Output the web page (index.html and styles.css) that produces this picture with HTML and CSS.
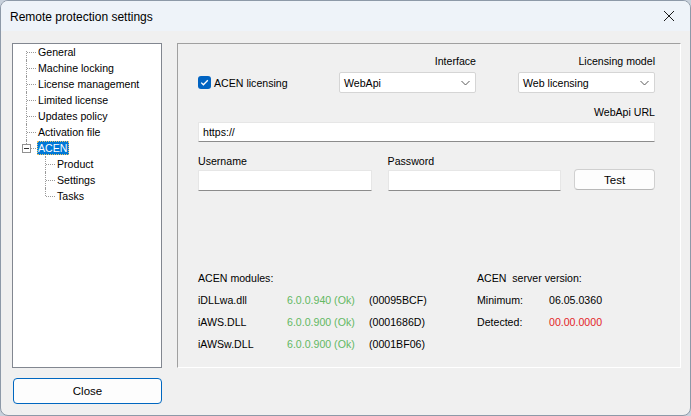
FILE: index.html
```html
<!DOCTYPE html>
<html>
<head>
<meta charset="utf-8">
<link rel="stylesheet" href="styles.css">
</head>
<body>
<div class="window">
  <div class="titlebar">
    <span class="title">Remote protection settings</span>
    <svg class="close-x" width="12" height="12" viewBox="0 0 12 12"><path d="M1 1 L11 11 M11 1 L1 11" stroke="#1a1a1a" stroke-width="1" fill="none"/></svg>
  </div>
  <div class="content">
    <div class="main">
      <div class="tree">
        <div class="row"><span class="conn first"></span><span class="lbl">General</span></div>
        <div class="row"><span class="conn"></span><span class="lbl">Machine locking</span></div>
        <div class="row"><span class="conn"></span><span class="lbl">License management</span></div>
        <div class="row"><span class="conn"></span><span class="lbl">Limited license</span></div>
        <div class="row"><span class="conn"></span><span class="lbl">Updates policy</span></div>
        <div class="row"><span class="conn"></span><span class="lbl">Activation file</span></div>
        <div class="row"><span class="conn expander"><span class="box"></span></span><span class="lbl selected">ACEN</span></div>
        <div class="row child"><span class="conn"></span><span class="lbl">Product</span></div>
        <div class="row child"><span class="conn"></span><span class="lbl">Settings</span></div>
        <div class="row child"><span class="conn last"></span><span class="lbl">Tasks</span></div>
      </div>
      <div class="panel">
        <div class="row-a">
          <div class="check-col">
            <span class="checkbox"><svg width="13" height="13" viewBox="0 0 13 13"><path d="M3.2 6.6 L5.4 8.8 L9.8 4.2" stroke="#fff" stroke-width="1.3" fill="none"/></svg></span>
            <span>ACEN licensing</span>
          </div>
          <div class="field">
            <div class="flabel">Interface</div>
            <div class="combo"><span>WebApi</span><svg width="9" height="6" viewBox="0 0 9 6"><path d="M0.5 1 L4.5 5 L8.5 1" stroke="#5a5a5a" stroke-width="1" fill="none"/></svg></div>
          </div>
          <div class="field lic">
            <div class="flabel">Licensing model</div>
            <div class="combo"><span>Web licensing</span><svg width="9" height="6" viewBox="0 0 9 6"><path d="M0.5 1 L4.5 5 L8.5 1" stroke="#5a5a5a" stroke-width="1" fill="none"/></svg></div>
          </div>
        </div>
        <div class="row-b">
          <div class="flabel">WebApi URL</div>
          <div class="input url">https://</div>
        </div>
        <div class="row-c">
          <div class="cfield">
            <div class="clabel">Username</div>
            <div class="input cred"></div>
          </div>
          <div class="cfield">
            <div class="clabel">Password</div>
            <div class="input cred"></div>
          </div>
          <div class="btn test">Test</div>
        </div>
        <div class="info">
          <div class="c1">ACEN modules:</div><div></div><div></div><div class="c4">ACEN&nbsp; server version:</div>
          <div>iDLLwa.dll</div><div class="ok">6.0.0.940 (Ok)</div><div>(00095BCF)</div><div>Minimum:</div><div>06.05.0360</div>
          <div>iAWS.DLL</div><div class="ok">6.0.0.900 (Ok)</div><div>(0001686D)</div><div>Detected:</div><div class="bad">00.00.0000</div>
          <div>iAWSw.DLL</div><div class="ok">6.0.0.900 (Ok)</div><div>(0001BF06)</div><div></div><div></div>
        </div>
      </div>
    </div>
    <div class="btn close">Close</div>
  </div>
</div>
</body>
</html>
```

FILE: styles.css
```css
* { box-sizing: border-box; }
html, body { margin: 0; padding: 0; }
body {
  width: 691px;
  height: 416px;
  background: #c8d1dc;
  font-family: "Liberation Sans", Arial, sans-serif;
  font-size: 10.6px;
  color: #000;
  overflow: hidden;
}
.window {
  width: 691px;
  height: 416px;
  border: 1px solid #8d99a8;
  border-radius: 8px;
  background: #f0f0f0;
  overflow: hidden;
  display: flex;
  flex-direction: column;
}
.titlebar {
  height: 30px;
  flex: none;
  background: #eef3f9;
  display: flex;
  align-items: center;
  padding: 0 10px 0 9px;
}
.title {
  font-size: 12px;
  flex: 1;
  padding-top: 1px;
}
.close-x { margin-right: 5px; }
.content {
  padding: 12px 9px 0 11px;
  display: flex;
  flex-direction: column;
}
.main {
  display: flex;
  height: 325px;
}
.tree {
  width: 150px;
  background: #fff;
  border: 1px solid #828790;
}
.row {
  height: 16px;
  display: flex;
  align-items: center;
  padding-left: 13px;
}
.row.child { padding-left: 32px; }
.conn {
  width: 11px;
  height: 16px;
  flex: none;
  position: relative;
}
.conn::before {
  content: "";
  position: absolute;
  left: 0;
  top: 0;
  height: 16px;
  border-left: 1px dotted #9a9a9a;
}
.conn.first::before { top: 7px; height: 9px; }
.conn.last::before { height: 8px; }
.conn::after {
  content: "";
  position: absolute;
  left: 1px;
  top: 8px;
  width: 9px;
  border-top: 1px dotted #9a9a9a;
}
.conn.expander::before { height: 4px; }
.conn.expander::after { left: 5px; width: 5px; }
.box {
  position: absolute;
  left: -4px;
  top: 4px;
  width: 9px;
  height: 9px;
  border: 1px solid #919191;
  background: #fff;
}
.box::after {
  content: "";
  position: absolute;
  left: 1px;
  top: 3px;
  width: 5px;
  border-top: 1px solid #333;
}
.lbl {
  line-height: 14px;
  padding: 0 1px;
  white-space: nowrap;
}
.lbl.selected {
  background: #0078d7;
  color: #fff;
  outline: 1px dotted #e9c46a;
  outline-offset: -1px;
  padding: 0 2px 0 1px;
}
.panel {
  width: 504px;
  margin-left: 15px;
  border-top: 1px solid #a0a0a0;
  border-left: 1px solid #a0a0a0;
  border-right: 1px solid #fff;
  border-bottom: 1px solid #fff;
  padding: 10px 25px 0 20px;
}
.row-a {
  display: flex;
  align-items: flex-end;
}
.check-col {
  width: 141px;
  display: flex;
  align-items: center;
  padding-bottom: 4px;
}
.checkbox {
  width: 13px;
  height: 13px;
  border-radius: 3px;
  background: #0063c2;
  display: inline-flex;
  margin-right: 3px;
}
.field {
  width: 137px;
  display: flex;
  flex-direction: column;
}
.field.lic { margin-left: auto; }
.flabel {
  line-height: 14px;
  text-align: right;
  margin-bottom: 4px;
}
.combo {
  height: 21px;
  background: #fff;
  border: 1px solid #d5d5d5;
  border-radius: 2px;
  display: flex;
  align-items: center;
  justify-content: space-between;
  padding: 1px 4px 0 4px;
}
.combo svg { margin-right: 1px; }
.row-b { margin-top: 12px; }
.row-b .flabel { margin-bottom: 3px; }
.input {
  background: #fff;
  border: 1px solid #e6e6e6;
  border-bottom: 1px solid #8c8c8c;
  border-radius: 1px;
}
.url {
  height: 20px;
  line-height: 18px;
  padding-left: 4px;
}
.row-c {
  margin-top: 12px;
  display: flex;
  align-items: flex-end;
}
.cfield {
  width: 174px;
  margin-right: 16px;
}
.cfield + .cfield { margin-right: 13px; }
.clabel {
  line-height: 14px;
  margin-bottom: 2px;
}
.cred { height: 21px; }
.btn {
  background: #fdfdfd;
  border: 1px solid #d0d0d0;
  border-bottom-color: #b8b8b8;
  border-radius: 4px;
  display: flex;
  align-items: center;
  justify-content: center;
}
.test {
  width: 81px;
  height: 21px;
  margin-bottom: 1px;
  font-size: 11.5px;
}
.info {
  margin-top: 76px;
  display: grid;
  grid-template-columns: 89px 82px 108px 72px auto;
  grid-auto-rows: 22px;
  align-items: center;
  white-space: nowrap;
}
.c4 { grid-column: 4 / 6; }
.ok { color: #63b863; }
.bad { color: #e3262a; }
.close {
  width: 149px;
  height: 26px;
  margin-top: 10px;
  margin-left: 1px;
  border: 1px solid #0067c0;
  font-size: 11.5px;
}
```
